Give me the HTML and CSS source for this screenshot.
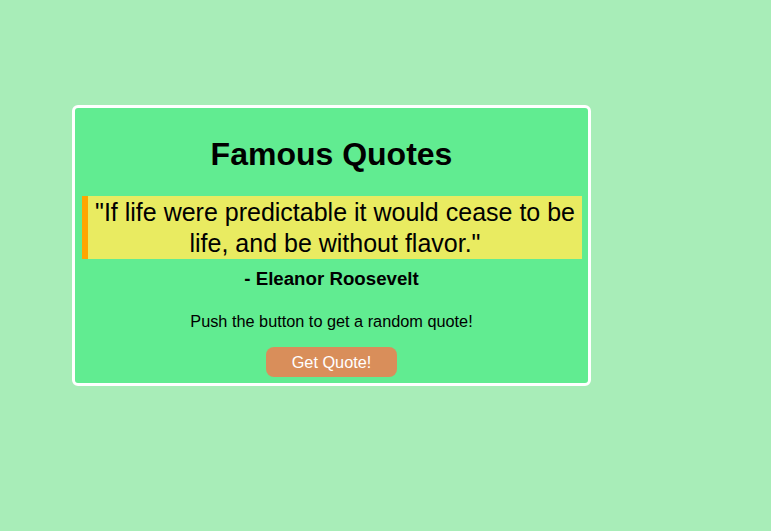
FILE: index.html
```html
<!DOCTYPE html>
<html>
<head>
<meta charset="utf-8">
<link rel="stylesheet" href="styles.css">
</head>
<body>
<main class="page">
  <section class="card">
    <h1 class="title">Famous Quotes</h1>
    <blockquote class="quote">"If life were predictable it would cease to be life, and be without flavor."</blockquote>
    <p class="author">- Eleanor Roosevelt</p>
    <p class="hint">Push the button to get a random quote!</p>
    <button class="btn">Get Quote!</button>
  </section>
</main>
</body>
</html>
```
FILE: styles.css
```css
html, body {
  margin: 0;
  padding: 0;
  background: #a8edb8;
  font-family: "Liberation Sans", Arial, sans-serif;
  color: #000;
}
.page {
  padding: 105px 0 0 72px;
}
.card {
  width: 513px;
  box-sizing: content-box;
  background: #61ec91;
  border: 3px solid #fff;
  border-radius: 6px;
  padding: 0 0 6px;
  display: flex;
  flex-direction: column;
  align-items: center;
  text-align: center;
}
.title {
  font-size: 32px;
  font-weight: bold;
  margin: 28px 0 23px;
  line-height: 37px;
}
.quote {
  align-self: stretch;
  margin: 0 6px 0 7px;
  background: #e9eb61;
  border-left: 6px solid #ffa500;
  font-size: 25px;
  line-height: 31px;
  padding: 1px 4px 0;
}
.author {
  font-size: 18.7px;
  font-weight: bold;
  margin: 9px 0 0;
  line-height: 21px;
}
.hint {
  font-size: 16.3px;
  margin: 23px 0 0;
  line-height: 18px;
}
.btn {
  margin-top: 17px;
  width: 131px;
  height: 30px;
  background: #d98e5a;
  color: #fff;
  border: none;
  border-radius: 8px;
  font-family: "Liberation Sans", Arial, sans-serif;
  font-size: 16.3px;
  padding: 0;
}
```
